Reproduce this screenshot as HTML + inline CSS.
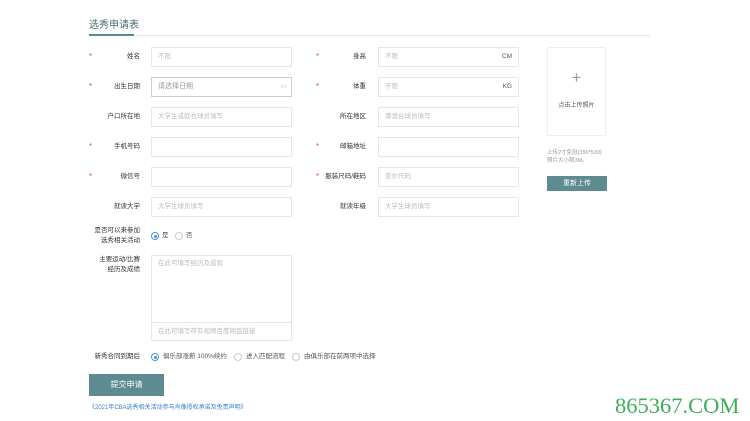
<!DOCTYPE html>
<html><head><meta charset="utf-8"><style>
*{margin:0;padding:0;box-sizing:border-box}
body{width:750px;height:421px;background:#fff;position:relative;overflow:hidden;font-family:"Liberation Sans","Noto Sans CJK SC",sans-serif;font-size:7px;color:#333}
.a{position:absolute}
.in{position:absolute;width:141px;height:20px;border:1px solid #e6e6e6;background:#fff;color:#bbb;font-size:6.5px;padding:0 0 0 6px;line-height:18px}
.lb{position:absolute;width:60px;text-align:right;font-size:6.5px;color:#333;line-height:10px}
.st{position:absolute;color:#d9534f;font-size:8px;line-height:10px}
.r{position:absolute;width:8px;height:8px;border:1px solid #ccc;border-radius:50%;background:#fff}
.r.on{border-color:#4a90d9}
.r.on:after{content:"";position:absolute;left:1.5px;top:1.5px;width:3px;height:3px;border-radius:50%;background:#4a90d9}
.t{position:absolute;font-size:6.5px;color:#555;line-height:10px}
</style></head><body>
<div class="a" style="left:89px;top:20px;font-size:10px;color:#4a6a70;line-height:12px">选秀申请表</div>
<div class="a" style="left:89px;top:35px;width:561px;height:1px;background:#e8e8e8"></div>
<div class="a" style="left:89px;top:34px;width:45px;height:2px;background:#5b8a90"></div>

<div class="st" style="left:89px;top:52px">*</div><div class="lb" style="left:80px;top:52px">姓名</div><div class="in" style="left:151px;top:47px">不限</div>
<div class="st" style="left:89px;top:82px">*</div><div class="lb" style="left:80px;top:82px">出生日期</div><div class="in" style="left:151px;top:77px;border-color:#ccc;color:#999;font-size:7px">请选择日期<span style="position:absolute;right:5px;top:0;color:#aaa;font-size:6px">▭</span></div>
<div class="lb" style="left:80px;top:112px">户口所在地</div><div class="in" style="left:151px;top:107px">大学生或就也球员填写</div>
<div class="st" style="left:89px;top:142px">*</div><div class="lb" style="left:80px;top:142px">手机号码</div><div class="in" style="left:151px;top:137px"></div>
<div class="st" style="left:89px;top:172px">*</div><div class="lb" style="left:80px;top:172px">微信号</div><div class="in" style="left:151px;top:167px"></div>
<div class="lb" style="left:80px;top:202px">就读大学</div><div class="in" style="left:151px;top:197px">大学生球员填写</div>

<div class="st" style="left:316px;top:52px">*</div><div class="lb" style="left:306px;top:52px">身高</div><div class="in" style="left:378px;top:47px">不限<span style="position:absolute;right:6px;color:#555">CM</span></div>
<div class="st" style="left:316px;top:82px">*</div><div class="lb" style="left:306px;top:82px">体重</div><div class="in" style="left:378px;top:77px">不限<span style="position:absolute;right:6px;color:#555">KG</span></div>
<div class="lb" style="left:306px;top:112px">所在地区</div><div class="in" style="left:378px;top:107px">港澳台球员填写</div>
<div class="st" style="left:316px;top:142px">*</div><div class="lb" style="left:306px;top:142px">邮箱地址</div><div class="in" style="left:378px;top:137px"></div>
<div class="st" style="left:316px;top:172px">*</div><div class="lb" style="left:306px;top:172px">服装尺码/鞋码</div><div class="in" style="left:378px;top:167px">亚尔尺码</div>
<div class="lb" style="left:306px;top:202px">就读年级</div><div class="in" style="left:378px;top:197px">大学生球员填写</div>

<div class="a" style="left:547px;top:47px;width:59px;height:89px;border:1px solid #eee"></div>
<div class="a" style="left:547px;top:68px;width:59px;text-align:center;font-size:17px;color:#999;font-weight:200;line-height:20px">+</div>
<div class="a" style="left:547px;top:100px;width:59px;text-align:center;font-size:6px;color:#555">点击上传照片</div>
<div class="a" style="left:547px;top:149px;font-size:5.5px;color:#999;line-height:8px">上传2寸免冠(350*530)<br>照片大小限3M。</div>
<div class="a" style="left:547px;top:176px;width:60px;height:15px;background:#5e8b91;color:#fff;text-align:center;font-size:7px;line-height:15px">重新上传</div>

<div class="lb" style="left:80px;top:226px;line-height:10px">是否可以来参加<br>选秀相关活动</div>
<div class="r on" style="left:151px;top:232px"></div><div class="t" style="left:162px;top:231px">是</div>
<div class="r" style="left:175px;top:232px"></div><div class="t" style="left:186px;top:231px">否</div>

<div class="lb" style="left:80px;top:255px;line-height:10px">主要运动/比赛<br>经历及成绩</div>
<div class="in" style="left:151px;top:255px;height:68px;line-height:16px">在此可填写经历及成就</div>
<div class="in" style="left:151px;top:322px;height:19px">在此可填写存有视频百度网盘链接</div>

<div class="lb" style="left:80px;top:352px">新秀合同到期后</div>
<div class="r on" style="left:151px;top:353px"></div><div class="t" style="left:163px;top:352px">俱乐部涨薪 100%续约</div>
<div class="r" style="left:234px;top:353px"></div><div class="t" style="left:246px;top:352px">进入匹配流程</div>
<div class="r" style="left:292px;top:353px"></div><div class="t" style="left:304px;top:352px">由俱乐部在前两项中选择</div>

<div class="a" style="left:89px;top:374px;width:75px;height:22px;background:#5e8b91;color:#fff;text-align:center;font-size:8px;line-height:22px">提交申请</div>
<div class="a" style="left:89px;top:402px;font-size:6px;color:#3b7fc4">《2021年CBA选秀相关活动参与肖像授权承诺及免责声明》</div>

<div class="a" style="left:615px;top:393px;font-family:'Liberation Serif',serif;font-size:22.5px;color:#3fae5a;line-height:26px">865367.COM</div>
</body></html>
